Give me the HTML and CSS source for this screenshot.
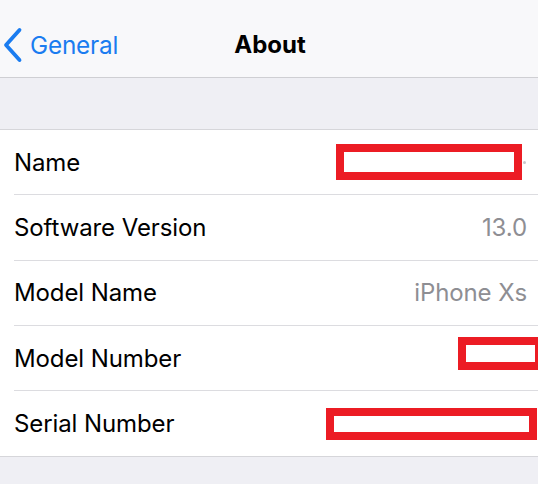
FILE: index.html
```html
<!DOCTYPE html>
<html>
<head>
<meta charset="utf-8">
<link rel="stylesheet" href="styles.css">
</head>
<body>
<div class="screen">
  <header class="nav">
    <div class="back">
      <svg class="chev" width="20" height="36" viewBox="0 0 20 36"><path d="M16.5 3 L3 18 L16.5 33" fill="none" stroke="#1a7cf0" stroke-width="3.8" stroke-linecap="round" stroke-linejoin="round"/></svg>
      <span class="back-label">General</span>
    </div>
    <div class="title">About</div>
  </header>
  <div class="gap"></div>
  <div class="group">
    <div class="row">
      <div class="row-inner">
        <span class="label">Name</span>
        <span class="redact r-name"></span>
        <span class="dot"></span>
      </div>
    </div>
    <div class="row">
      <div class="row-inner">
        <span class="label">Software Version</span>
        <span class="value">13.0</span>
      </div>
    </div>
    <div class="row">
      <div class="row-inner">
        <span class="label">Model Name</span>
        <span class="value">iPhone Xs</span>
      </div>
    </div>
    <div class="row">
      <div class="row-inner">
        <span class="label">Model Number</span>
        <span class="redact r-model"></span>
      </div>
    </div>
    <div class="row last">
      <div class="row-inner">
        <span class="label">Serial Number</span>
        <span class="redact r-serial"></span>
      </div>
    </div>
  </div>
</div>
</body>
</html>
```
FILE: styles.css
```css
* { box-sizing: border-box; }
html, body { margin: 0; padding: 0; }
body {
  width: 538px;
  height: 484px;
  overflow: hidden;
  background: #efeff4;
  font-family: Inter, "Liberation Sans", sans-serif;
}
.screen { width: 538px; }
.nav {
  position: relative;
  height: 78px;
  background: #f8f8fa;
  border-bottom: 1px solid #cfcfd3;
  display: flex;
  align-items: center;
  padding-top: 12px;
}
.back {
  display: flex;
  align-items: center;
  padding-left: 3px;
  gap: 7px;
}
.chev { display: block; margin-top: 1px; }
.back-label {
  color: #1a7cf0;
  font-size: 24.3px;
  letter-spacing: -0.2px;
}
.title {
  position: absolute;
  left: 0;
  right: 0;
  top: 12px;
  bottom: 0;
  display: flex;
  align-items: center;
  justify-content: center;
  font-size: 24px;
  font-weight: 700;
  color: #000;
  padding-left: 2px;
  pointer-events: none;
}
.gap {
  height: 52px;
  background: #efeff4;
  border-bottom: 1px solid #d6d6da;
}
.group {
  background: #fff;
  border-bottom: 1px solid #d6d6da;
}
.row {
  height: 65.3px;
  padding-left: 14px;
  overflow: hidden;
}
.row-inner {
  height: 100%;
  display: flex;
  align-items: center;
  justify-content: space-between;
  padding-right: 11px;
  border-bottom: 1px solid #dcdce0;
}
.row.last .row-inner { border-bottom: none; }
.label {
  font-size: 24px;
  color: #000;
  letter-spacing: -0.1px;
}
.value {
  font-size: 24px;
  color: #8e8e93;
  letter-spacing: -0.1px;
}
.redact {
  display: block;
  border: 8px solid #ec1c24;
  background: #fff;
  flex: none;
}
.r-name {
  width: 186px;
  height: 36px;
  margin-left: auto;
  margin-right: 0;
}
.dot {
  width: 3px;
  height: 3px;
  border-radius: 50%;
  background: #c7c7cc;
  margin-right: 1px;
  margin-left: 1px;
}
.r-model {
  width: 85px;
  height: 33px;
  margin-right: -16px;
  margin-top: -9px;
}
.r-serial {
  width: 211px;
  height: 32px;
  margin-right: -10px;
}
```
